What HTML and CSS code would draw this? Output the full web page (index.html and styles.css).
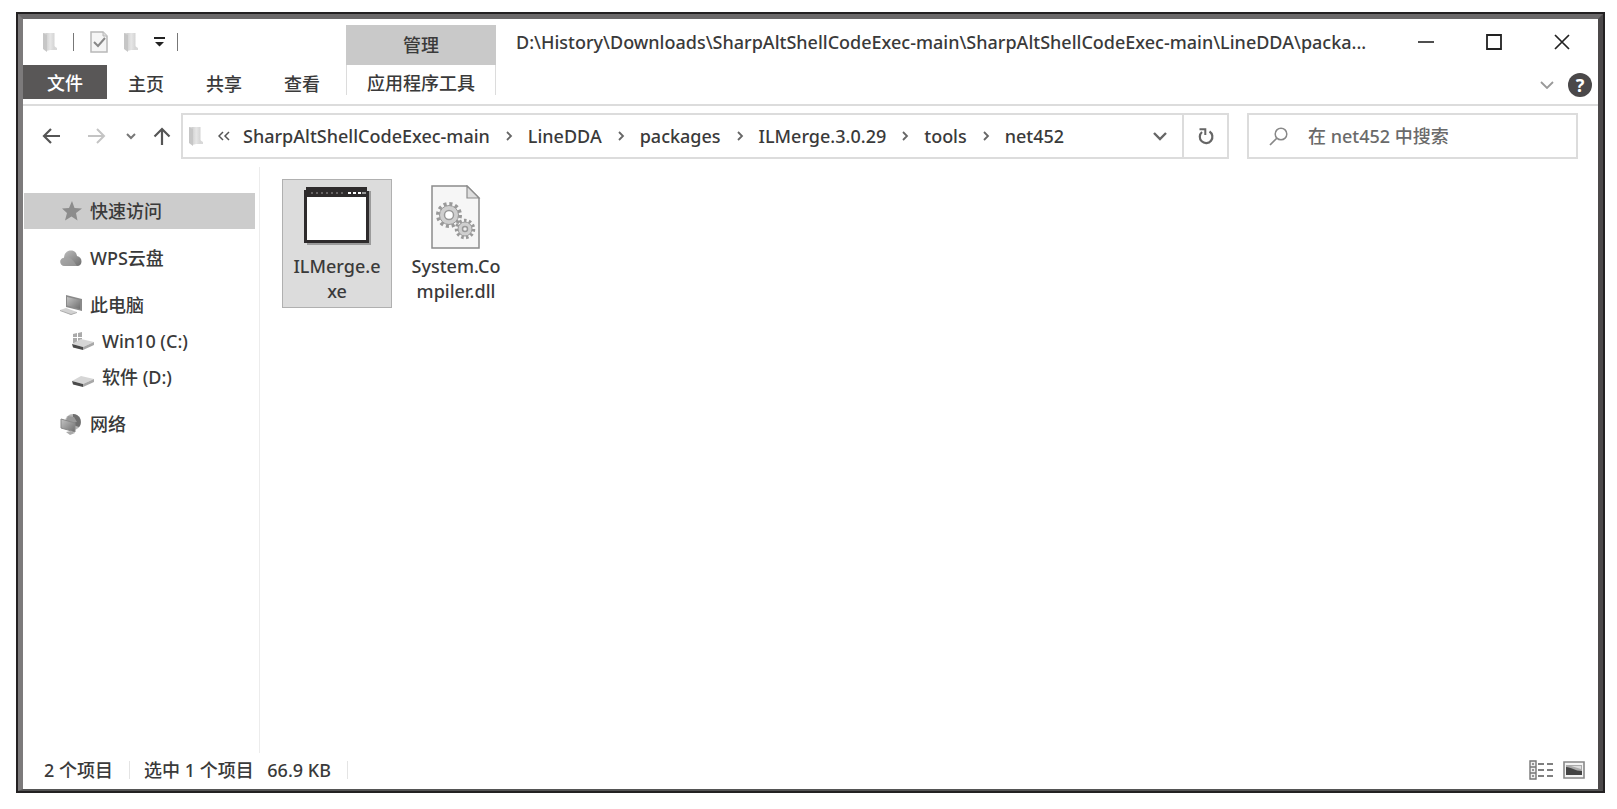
FILE: index.html
```html
<!DOCTYPE html>
<html lang="zh-CN">
<head>
    <meta charset="UTF-8">
    <meta name="viewport" content="width=device-width, initial-scale=1.0">
    <title>net452</title>
    <link rel="stylesheet" href="styles.css">
</head>
<body>
    <!-- 共用图标 -->
    <svg class="sprite" aria-hidden="true">
        <defs>
            <linearGradient id="folderFill" x1="0" y1="0" x2="1" y2="0">
                <stop offset="0" stop-color="#cfcfcf"/>
                <stop offset="0.5" stop-color="#e6e6e6"/>
                <stop offset="1" stop-color="#d4d4d4"/>
            </linearGradient>
            <linearGradient id="grayFill" x1="0" y1="0" x2="1" y2="1">
                <stop offset="0" stop-color="#c4c4c4"/>
                <stop offset="1" stop-color="#6e6e6e"/>
            </linearGradient>
            <symbol id="folder" viewBox="0 0 14 20">
                <path d="M0 1h11v13l3 2v2H4z" fill="#d9d9d9"/>
                <path d="M3 1h8.500v16L3 19z" fill="url(#folderFill)"/>
                <path d="M0 1l4 2v17l-4-3z" fill="#c6c6c6"/>
            </symbol>
            <symbol id="crumbArrow" viewBox="0 0 8 10">
                <path d="M2 1l4 4-4 4" fill="none" stroke="#666" stroke-width="1.800"/>
            </symbol>
            <symbol id="drive" viewBox="0 0 22 12">
                <path d="M0 6L9 1l13 3-11 5z" fill="#d6d6d6"/>
                <path d="M0 6l11 3v3L1 9.500z" fill="#4a4a4a"/>
                <path d="M11 9l11-5v3l-11 5z" fill="#a8a8a8"/>
            </symbol>
        </defs>
    </svg>

    <div class="window">
        <header class="header">
            <div class="quick-bar">
                <svg class="icon-folder" aria-hidden="true"><use href="#folder"/></svg>
                <span class="bar-line"></span>
                <button class="quick-btn" aria-label="属性">
                    <svg width="18" height="22" viewBox="0 0 18 22">
                        <path d="M1 1h12l4 4v16H1z" fill="#f5f5f5" stroke="#b8b8b8" stroke-width="1.500"/>
                        <path d="M13 1v4h4" fill="#ddd" stroke="#b8b8b8"/>
                        <path d="M4 11l4 4 7-8" fill="none" stroke="#888" stroke-width="2"/>
                    </svg>
                </button>
                <button class="quick-btn" aria-label="新建文件夹">
                    <svg class="icon-folder"><use href="#folder"/></svg>
                </button>
                <button class="quick-btn" aria-label="自定义快速访问工具栏">
                    <svg width="11" height="10" viewBox="0 0 11 10">
                        <path d="M0 0h11v2H0zM1 5h9L5.500 9.500z" fill="#222"/>
                    </svg>
                </button>
                <span class="bar-line"></span>
            </div>
            <div class="tool-group">管理</div>
            <div class="title-bar">
                <h1 class="title">D:\History\Downloads\SharpAltShellCodeExec-main\SharpAltShellCodeExec-main\LineDDA\packa...</h1>
                <div class="window-buttons">
                    <button aria-label="最小化">
                        <svg width="16" height="16" viewBox="0 0 16 16"><path d="M0 8h16" stroke="#222" stroke-width="1.600"/></svg>
                    </button>
                    <button aria-label="最大化">
                        <svg width="16" height="16" viewBox="0 0 16 16"><path d="M1 1h14v14H1z" fill="none" stroke="#222" stroke-width="1.800"/></svg>
                    </button>
                    <button aria-label="关闭">
                        <svg width="16" height="16" viewBox="0 0 16 16"><path d="M1 1l14 14M15 1L1 15" stroke="#222" stroke-width="1.700"/></svg>
                    </button>
                </div>
            </div>

            <nav class="tabs" aria-label="功能区">
                <button class="tab tab-file">文件</button>
                <button class="tab">主页</button>
                <button class="tab">共享</button>
                <button class="tab">查看</button>
            </nav>
            <button class="tab tab-tools">应用程序工具</button>
            <div class="ribbon-end">
                <button aria-label="展开功能区">
                    <svg width="14" height="8" viewBox="0 0 14 8"><path d="M1 1l6 6 6-6" fill="none" stroke="#999" stroke-width="1.800"/></svg>
                </button>
                <button class="help" aria-label="帮助">?</button>
            </div>
        </header>

        <div class="address-row">
            <div class="nav-buttons">
                <button aria-label="后退">
                    <svg width="19" height="16" viewBox="0 0 19 16"><path d="M18 8H2M9 1L2 8l7 7" fill="none" stroke="#555" stroke-width="2.200"/></svg>
                </button>
                <button aria-label="前进" disabled>
                    <svg width="19" height="16" viewBox="0 0 19 16"><path d="M1 8h16M10 1l7 7-7 7" fill="none" stroke="#c4c4c4" stroke-width="2"/></svg>
                </button>
                <button aria-label="最近浏览的位置">
                    <svg width="10" height="7" viewBox="0 0 10 7"><path d="M1 1l4 4 4-4" fill="none" stroke="#777" stroke-width="2"/></svg>
                </button>
                <button aria-label="上移">
                    <svg width="18" height="18" viewBox="0 0 18 18"><path d="M9 18V2M1.500 9.500L9 2l7.500 7.500" fill="none" stroke="#555" stroke-width="2.200"/></svg>
                </button>
            </div>
            <div class="address">
                <svg class="icon-folder" aria-hidden="true"><use href="#folder"/></svg>
                <button class="crumb-more" aria-label="更多">
                    <svg width="12" height="10" viewBox="0 0 12 10"><path d="M5 1L1 5l4 4M11 1L7 5l4 4" fill="none" stroke="#555" stroke-width="1.500"/></svg>
                </button>
                <nav class="crumbs" aria-label="路径">
                    <a href="#">SharpAltShellCodeExec-main</a>
                    <svg class="crumb-arrow"><use href="#crumbArrow"/></svg>
                    <a href="#">LineDDA</a>
                    <svg class="crumb-arrow"><use href="#crumbArrow"/></svg>
                    <a href="#">packages</a>
                    <svg class="crumb-arrow"><use href="#crumbArrow"/></svg>
                    <a href="#">ILMerge.3.0.29</a>
                    <svg class="crumb-arrow"><use href="#crumbArrow"/></svg>
                    <a href="#">tools</a>
                    <svg class="crumb-arrow"><use href="#crumbArrow"/></svg>
                    <a href="#">net452</a>
                </nav>
                <button class="address-drop" aria-label="以前的位置">
                    <svg width="14" height="9" viewBox="0 0 14 9"><path d="M1 1l6 6 6-6" fill="none" stroke="#666" stroke-width="2.400"/></svg>
                </button>
                <button class="refresh" aria-label="刷新">
                    <svg width="16" height="18" viewBox="0 0 16 18">
                        <path d="M11.500 4.500A6.300 6.300 0 1 1 4 5" fill="none" stroke="#666" stroke-width="2.200"/>
                        <path d="M1.500 2.200h5.800V8" fill="none" stroke="#666" stroke-width="2"/>
                    </svg>
                </button>
            </div>
            <label class="search">
                <svg width="19" height="19" viewBox="0 0 19 19" aria-hidden="true">
                    <circle cx="12" cy="7" r="5.800" fill="none" stroke="#888" stroke-width="1.500"/>
                    <path d="M8 11l-7 7" stroke="#888" stroke-width="1.700"/>
                </svg>
                <input type="text" aria-label="搜索" placeholder="在 net452 中搜索">
            </label>
        </div>

        <div class="content">
            <nav class="sidebar" aria-label="导航窗格">
                <a class="place active" href="#">
                    <svg width="22" height="22" viewBox="0 0 22 22"><path d="M12 1l2.500 7 7.500.500-6 4.500 1.500 7.500-6-4-6.500 4 2-7.500L2 8.500 9 8z" fill="#8c8c8c"/></svg>
                    快速访问
                </a>
                <a class="place" href="#">
                    <svg width="22" height="22" viewBox="0 0 22 22">
                        <path d="M5 19c-6 0-6-8-1-8 0-9 12-10 13-2 6 1 6 10 0 10z" fill="url(#grayFill)"/>
                        <path d="M3 11c6-3 10 2 14 8H5c-6 0-6-7-2-8z" fill="#a5a5a5" opacity="0.600"/>
                    </svg>
                    WPS云盘
                </a>
                <a class="place" href="#">
                    <svg width="22" height="22" viewBox="0 0 22 22">
                        <path d="M6 1l16 4v12L6 13z" fill="#8a8a8a"/>
                        <path d="M7 3l13 3v9L7 11.500z" fill="url(#grayFill)"/>
                        <path d="M0 16l6-2 11 4-6 3z" fill="#d2d2d2"/>
                        <path d="M0 16l11 4v1L0 17zM11 20l6-2v1l-6 2z" fill="#aaa"/>
                    </svg>
                    此电脑
                </a>
                <a class="place drive" href="#">
                    <svg width="22" height="22" viewBox="0 0 22 22">
                        <path d="M1 4l4-1v4H1zM6 3l4-1v5H6zM1 8h4v5H1zM6 8h4v5H6z" fill="#aaa"/>
                        <use href="#drive" y="8" width="22" height="12"/>
                    </svg>
                    Win10 (C:)
                </a>
                <a class="place drive" href="#">
                    <svg width="22" height="22" viewBox="0 0 22 22"><use href="#drive" y="9" width="22" height="12"/></svg>
                    软件 (D:)
                </a>
                <a class="place" href="#">
                    <svg width="22" height="22" viewBox="0 0 22 22">
                        <circle cx="13" cy="9" r="8" fill="#b5b5b5"/>
                        <path d="M13 1c7 0 10 8 6 13l-6-2z" fill="#6f6f6f"/>
                        <path d="M8 3l6 1 3 5-5 1-6-2z" fill="#999"/>
                        <path d="M1 6l14 4v9L1 15z" fill="url(#grayFill)" stroke="#888"/>
                        <path d="M6 19l5-1 4 2-5 2z" fill="#aaa"/>
                    </svg>
                    网络
                </a>
            </nav>

            <main class="files">
                <button class="file selected">
                    <svg width="68" height="60" viewBox="0 0 68 60">
                        <path d="M4 4h64v54H4z" fill="#9b9b9b"/>
                        <path d="M3 0h61v4h2v52H1V3h2z" fill="#2e2b2c"/>
                        <path d="M4 10h59v43H4z" fill="#fff"/>
                        <path d="M8 6h34" stroke="#686566" stroke-width="2" stroke-dasharray="2 3"/>
                        <path d="M45 5h3v2h-3zM50 5h3v2h-3zM55 5h3v2h-3z" fill="#fff"/>
                        <path d="M59 5h4v2h-4z" fill="#999"/>
                    </svg>
                    <span>ILMerge.exe</span>
                </button>
                <button class="file">
                    <svg width="50" height="64" viewBox="0 0 50 64">
                        <path d="M1 1h35l12 12v50H1z" fill="#f6f6f6" stroke="#8c8c8c" stroke-width="1.500"/>
                        <path d="M36 1v12h12z" fill="#dedede" stroke="#8c8c8c" stroke-width="1.200"/>
                        <g fill="#cfcfcf" stroke="#999">
                            <circle cx="18" cy="30" r="11" fill="none" stroke-width="4" stroke-dasharray="3 2.760"/>
                            <circle cx="18" cy="30" r="9.500"/>
                            <circle cx="18" cy="30" r="4.500" fill="#fff" stroke-width="1.500"/>
                            <circle cx="34" cy="44" r="8.500" fill="none" stroke-width="3.500" stroke-dasharray="2.500 2.350"/>
                            <circle cx="34" cy="44" r="7"/>
                            <circle cx="34" cy="44" r="2.500" fill="#eee" stroke-width="1.500"/>
                        </g>
                    </svg>
                    <span>System.Compiler.dll</span>
                </button>
            </main>
        </div>

        <footer class="status">
            <span class="status-item">2 个项目</span>
            <span class="status-item">选中 1 个项目&ensp; 66.9 KB</span>
            <div class="view-buttons">
                <button aria-label="详细信息">
                    <svg width="24" height="20" viewBox="0 0 24 20">
                        <path d="M1 1h6v18H1zM1 7h6M1 13h6" fill="#eee" stroke="#777" stroke-width="1.400"/>
                        <path d="M3 4h2M3 10h2M3 16h2" stroke="#777" stroke-width="1.500"/>
                        <path d="M9 4h6M18 4h6M9 10h6M18 10h6M9 16h6M18 16h6" stroke="#555" stroke-width="1.600"/>
                    </svg>
                </button>
                <button aria-label="大图标">
                    <svg width="22" height="18" viewBox="0 0 22 18">
                        <path d="M1 1h20v16H1z" fill="#f4f4f4" stroke="#888" stroke-width="1.600"/>
                        <path d="M3 4h16v10H3z" fill="#aaa"/>
                        <path d="M3 6c5 0 9 4 16 4v4H3z" fill="#444"/>
                        <path d="M8 5h10v3z" fill="#ddd"/>
                    </svg>
                </button>
            </div>
        </footer>
    </div>
</body>
</html>
```
FILE: styles.css
```css
* {
    box-sizing: border-box;
    margin: 0;
    padding: 0;
}

body {
    font-family: "Noto Sans", "Noto Sans CJK SC", sans-serif;
    font-size: 18px;
    font-weight: 500;
    line-height: 24px;
    color: #3a3a3a;
    background-color: #fff;
    min-height: 100vh;
    padding: 12px 12px 16px 16px;
    display: flex;
}
button,
input {
    font: inherit;
    color: inherit;
    background: none;
    border: none;
}
button {
    display: flex;
    align-items: center;
    justify-content: center;
    cursor: pointer;
}
a {
    color: inherit;
    text-decoration: none;
}
svg {
    display: block;
    flex-shrink: 0;
}
.sprite {
    position: absolute;
    width: 0;
    height: 0;
}
.window {
    flex: 1;
    min-width: 0;
    display: flex;
    flex-direction: column;
    border: 5px solid;
    border-color: #6a6869 #4c494a #555 #7c7a7b;
    border-bottom-width: 2px;
    outline: 2px solid #232122;
    margin: 2px;
}
.icon-folder {
    width: 14px;
    height: 20px;
}

/* 标题栏和功能区 */
.header {
    display: grid;
    grid-template-columns: 323px 150px minmax(0, 1fr);
    grid-template-rows: 46px 39px;
    border-bottom: 2px solid #dcdcdc;
}
.quick-bar {
    display: flex;
    align-items: center;
    gap: 16px;
    padding-left: 20px;
}
.bar-line {
    width: 1px;
    height: 18px;
    background-color: #777;
}
.bar-line:last-child {
    margin-left: -4px;
}
.tool-group {
    background-color: #c9c9c9;
    margin-top: 6px;
    display: flex;
    align-items: center;
    justify-content: center;
}
.title-bar {
    display: flex;
    align-items: center;
    justify-content: space-between;
    padding: 0 2px 0 20px;
}
.title {
    font-size: 18px;
    font-weight: 500;
    white-space: nowrap;
    overflow: hidden;
    text-overflow: ellipsis;
}
.window-buttons {
    display: flex;
}
.window-buttons button {
    width: 68px;
    height: 46px;
}
.tabs {
    display: flex;
}
.tab {
    height: 34px;
    padding: 3px 21px 0;
}
.tab-file {
    background-color: #595757;
    color: #fff;
    padding: 2px 24px 0;
}
.tab-tools {
    height: 30px;
    padding: 6px 0 0;
    border-left: 1px solid #dcdcdc;
    border-right: 1px solid #dcdcdc;
}
.ribbon-end {
    display: flex;
    align-items: center;
    justify-content: flex-end;
    gap: 14px;
    padding-right: 6px;
}
.help {
    width: 24px;
    height: 24px;
    border-radius: 50%;
    background-color: #4a4849;
    color: #fff;
    font-weight: bold;
}

/* 地址栏 */
.address-row {
    display: flex;
    align-items: center;
    padding: 7px 20px 8px 19px;
}
.nav-buttons {
    display: flex;
    align-items: center;
    width: 139px;
}
.nav-buttons button {
    margin-right: 17px;
}
.nav-buttons button:first-child {
    margin-right: 26px;
}
.nav-buttons button:nth-child(2) {
    margin-right: 20px;
}
.nav-buttons button:last-child {
    margin-right: 0;
}
.address {
    flex: 1;
    height: 46px;
    display: flex;
    align-items: center;
    border: 2px solid #dcdcdc;
    padding-left: 6px;
}
.crumb-more {
    margin: 0 13px 0 15px;
}
.crumbs {
    flex: 1;
    display: flex;
    align-items: center;
    gap: 15px;
    white-space: nowrap;
}
.crumb-arrow {
    width: 8px;
    height: 10px;
}
.address-drop,
.refresh {
    width: 45px;
    height: 42px;
}
.refresh {
    border-left: 2px solid #dcdcdc;
}
.search {
    width: 331px;
    height: 46px;
    margin-left: 18px;
    padding: 0 20px;
    display: flex;
    align-items: center;
    gap: 20px;
    border: 2px solid #dcdcdc;
}
.search input {
    flex: 1;
    min-width: 0;
    outline: none;
}
.search input::placeholder {
    color: #6a6a6a;
    opacity: 1;
}

/* 导航窗格和文件 */
.content {
    flex: 1;
    display: flex;
}
.sidebar {
    width: 237px;
    padding: 26px 4px 0 1px;
    border-right: 1px solid #ececec;
}
.place {
    display: flex;
    align-items: center;
    gap: 8px;
    height: 36px;
    padding-left: 36px;
    margin-bottom: 11px;
}
.place.active {
    background-color: #cccccc;
}
.place:has(+ .drive) {
    margin-bottom: 0;
}
.place.drive {
    padding-left: 48px;
}
.files {
    flex: 1;
    display: flex;
    align-items: flex-start;
    gap: 9px;
    padding: 12px 22px;
}
.file {
    width: 110px;
    height: 129px;
    flex-direction: column;
    justify-content: flex-start;
    gap: 5px;
    padding: 5px 8px 0;
    border: 1px solid transparent;
    line-height: 25px;
}
.file svg {
    height: 64px;
}
.file span {
    width: 92px;
    word-break: break-all;
}
.file.selected {
    background-color: #dcdcdc;
    border-color: #b0b0b0;
}

/* 状态栏 */
.status {
    display: flex;
    align-items: center;
    height: 36px;
    padding: 0 13px 2px 21px;
}
.status-item {
    padding-right: 16px;
    margin-right: 14px;
    border-right: 1px solid #e4e4e4;
    line-height: 18px;
}
.view-buttons {
    display: flex;
    gap: 10px;
    margin-left: auto;
}
```
